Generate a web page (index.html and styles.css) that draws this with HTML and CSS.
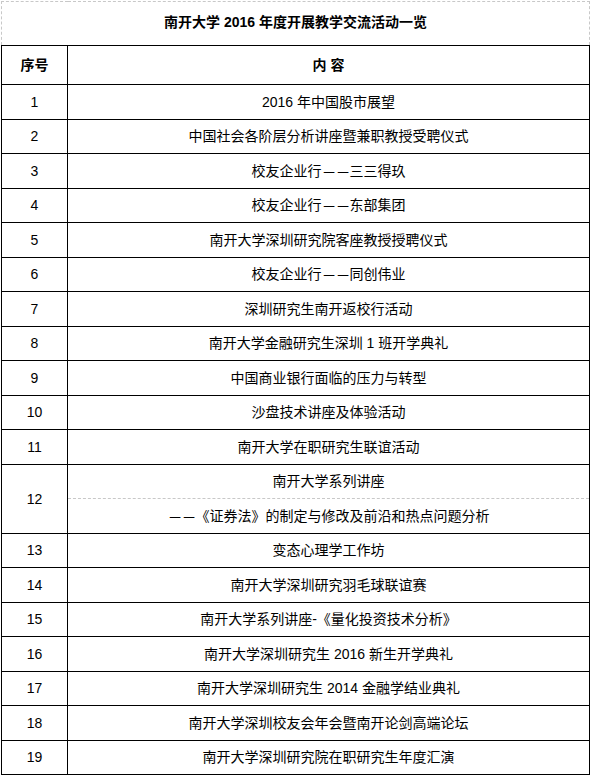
FILE: index.html
```html
<!DOCTYPE html>
<html lang="zh-CN">
<head>
<meta charset="utf-8">
<title>南开大学2016年度开展教学交流活动一览</title>
<link rel="stylesheet" href="styles.css">
</head>
<body>
<table class="events">
  <colgroup><col class="col-no"><col class="col-content"></colgroup>
  <thead>
    <tr class="title-row"><th colspan="2" class="title">南开大学 2016 年度开展教学交流活动一览</th></tr>
    <tr class="head-row"><th>序号</th><th>内 容</th></tr>
  </thead>
  <tbody>
    <tr><td>1</td><td>2016 年中国股市展望</td></tr>
    <tr><td>2</td><td>中国社会各阶层分析讲座暨兼职教授受聘仪式</td></tr>
    <tr><td>3</td><td>校友企业行<span class="em">—</span><span class="em">—</span>三三得玖</td></tr>
    <tr><td>4</td><td>校友企业行<span class="em">—</span><span class="em">—</span>东部集团</td></tr>
    <tr><td>5</td><td>南开大学深圳研究院客座教授授聘仪式</td></tr>
    <tr><td>6</td><td>校友企业行<span class="em">—</span><span class="em">—</span>同创伟业</td></tr>
    <tr><td>7</td><td>深圳研究生南开返校行活动</td></tr>
    <tr><td>8</td><td>南开大学金融研究生深圳 1 班开学典礼</td></tr>
    <tr><td>9</td><td>中国商业银行面临的压力与转型</td></tr>
    <tr><td>10</td><td>沙盘技术讲座及体验活动</td></tr>
    <tr><td>11</td><td>南开大学在职研究生联谊活动</td></tr>
    <tr><td rowspan="2">12</td><td class="split-top">南开大学系列讲座</td></tr>
    <tr><td class="split-bottom"><span class="em">—</span><span class="em">—</span>《证券法》的制定与修改及前沿和热点问题分析</td></tr>
    <tr><td>13</td><td>变态心理学工作坊</td></tr>
    <tr><td>14</td><td>南开大学深圳研究羽毛球联谊赛</td></tr>
    <tr><td>15</td><td>南开大学系列讲座-《量化投资技术分析》</td></tr>
    <tr><td>16</td><td>南开大学深圳研究生 2016 新生开学典礼</td></tr>
    <tr><td>17</td><td>南开大学深圳研究生 2014 金融学结业典礼</td></tr>
    <tr><td>18</td><td>南开大学深圳校友会年会暨南开论剑高端论坛</td></tr>
    <tr><td>19</td><td>南开大学深圳研究院在职研究生年度汇演</td></tr>
  </tbody>
</table>
</body>
</html>
```

FILE: styles.css
```css
html, body {
  margin: 0;
  padding: 0;
  background: #fff;
}
body {
  padding: 1px;
  font-family: "Liberation Sans", "Noto Sans CJK SC", sans-serif;
  font-size: 14px;
  color: #000;
}
.events {
  border-collapse: collapse;
  width: 589px;
  table-layout: fixed;
}
.col-no { width: 66px; }
.events th,
.events td {
  border: 1px solid #000;
  text-align: center;
  vertical-align: middle;
  padding: 0;
  line-height: 16px;
}
.events th {
  font-weight: bold;
}
.title-row { height: 44px; }
.events th.title {
  border: 1px dashed #c8c8c8;
  border-bottom: 1px solid #000;
  font-size: 14px;
  padding-bottom: 3px;
}
.head-row { height: 39px; }
.events tbody tr { height: 34.5px; }
.events td.split-top { border-bottom: 1px dashed #c8c8c8; }
.events td.split-bottom { border-top: 1px dashed #c8c8c8; }
.em {
  display: inline-block;
  width: 14px;
  text-align: center;
  transform: scaleX(0.76);
}
```
